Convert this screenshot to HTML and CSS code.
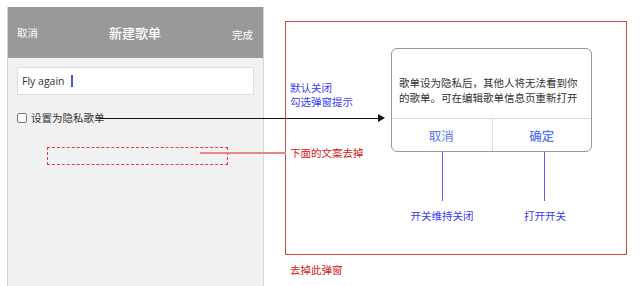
FILE: index.html
```html
<!DOCTYPE html>
<html lang="zh">
<head>
    <meta charset="UTF-8">
    <title>新建歌单</title>
    <link rel="stylesheet" href="styles.css">
</head>
<body>
    <div class="board">

        <div class="phone">
            <div class="phone-header">
                <span class="hd-side">取消</span>
                <span class="hd-title">新建歌单</span>
                <span class="hd-side hd-done">完成</span>
            </div>
            <div class="phone-body">
                <div class="name-input">Fly again<span class="caret"></span></div>
                <label class="private-row"><span class="checkbox"></span>设置为隐私歌单</label>
                <div class="removed-box"></div>
            </div>
        </div>

        <!-- 注释标注 -->
        <div class="frame"></div>
        <div class="note note-blue note-default">默认关闭<br>勾选弹窗提示</div>
        <div class="arrow"></div>
        <div class="red-line"></div>
        <div class="note note-red note-remove">下面的文案去掉</div>
        <div class="note note-red note-popup">去掉此弹窗</div>

        <div class="dialog">
            <div class="dialog-msg">歌单设为隐私后，其他人将无法看到你的歌单。可在编辑歌单信息页重新打开</div>
            <div class="dialog-btns">
                <span class="dialog-btn">取消</span>
                <span class="dialog-btn dialog-ok">确定</span>
            </div>
        </div>

        <div class="lead lead-cancel"></div>
        <div class="lead lead-ok"></div>
        <div class="note note-blue lead-label label-cancel">开关维持关闭</div>
        <div class="note note-blue lead-label label-ok">打开开关</div>
    </div>
</body>
</html>
```

FILE: styles.css
```css
body {
    margin: 0;
    background: #fff;
    font-family: "Noto Sans CJK SC", "Liberation Sans", sans-serif;
    overflow: hidden;
}
.board {
    position: relative;
    width: 640px;
    height: 286px;
}
.phone {
    position: absolute;
    left: 7px;
    top: 7px;
    width: 255px;
    height: 290px;
    background: #f1f1f1;
    border-left: 1px solid #d6d6d6;
    border-right: 1px solid #d6d6d6;
}
.phone-header {
    height: 51px;
    background: #999;
    color: #fff;
    display: flex;
    align-items: center;
    justify-content: space-between;
    padding: 0 10px 0 9px;
}
.hd-side {
    font-size: 10.5px;
    width: 30px;
}
.hd-done {
    text-align: right;
    margin-top: 3px;
}
.hd-title {
    font-size: 13px;
    font-weight: 500;
}
.phone-body {
    padding: 9px 9px 0 9px;
}
.name-input {
    height: 26px;
    background: #fff;
    border: 1px solid #ddd;
    font-family: "Open Sans", "Liberation Sans", sans-serif;
    font-size: 10.5px;
    color: #333;
    display: flex;
    align-items: center;
    padding-left: 4px;
}
.caret {
    display: inline-block;
    width: 2px;
    height: 12px;
    background: #3b5bdb;
    margin-left: 6px;
}
.private-row {
    display: flex;
    align-items: center;
    margin-top: 15px;
    font-size: 10.5px;
    color: #333;
}
.checkbox {
    width: 8px;
    height: 8px;
    border: 1px solid #777;
    border-radius: 2px;
    background: #fff;
    margin-right: 4px;
}
.removed-box {
    margin: 22px 0 0 30px;
    width: 179px;
    height: 16px;
    border: 1px dashed #e83a3a;
}
.frame {
    position: absolute;
    left: 285px;
    top: 21px;
    width: 340px;
    height: 232px;
    border: 1px solid #d64545;
}
.note {
    position: absolute;
    font-size: 10.5px;
    line-height: 14px;
    white-space: nowrap;
}
.note-blue {
    color: #3a3af5;
}
.note-red {
    color: #d42020;
}
.note-default {
    left: 290px;
    top: 81px;
}
.note-remove {
    left: 290px;
    top: 146px;
}
.note-popup {
    left: 290px;
    top: 263px;
}
.arrow {
    position: absolute;
    left: 100px;
    top: 118px;
    width: 279px;
    height: 1px;
    background: #111;
}
.arrow::after {
    content: "";
    position: absolute;
    right: -6px;
    top: -4px;
    border-left: 7px solid #111;
    border-top: 4.5px solid transparent;
    border-bottom: 4.5px solid transparent;
}
.red-line {
    position: absolute;
    left: 200px;
    top: 152px;
    width: 86px;
    height: 2px;
    background: #e48888;
}
.dialog {
    position: absolute;
    left: 391px;
    top: 48px;
    width: 199px;
    height: 102px;
    border: 1px solid #999;
    border-radius: 6px;
    background: #fff;
    display: flex;
    flex-direction: column;
}
.dialog-msg {
    height: 70px;
    box-sizing: border-box;
    padding: 26px 8px 0 7px;
    font-size: 10.5px;
    line-height: 15px;
    color: #333;
    border-bottom: 1px solid #ddd;
}
.dialog-btns {
    flex: 1;
    display: flex;
}
.dialog-btn {
    flex: 1;
    display: flex;
    align-items: center;
    justify-content: center;
    font-size: 12.5px;
    color: #5a78f0;
}
.dialog-ok {
    border-left: 1px solid #ddd;
    margin-left: 1px;
    font-weight: 500;
}
.lead {
    position: absolute;
    top: 152px;
    width: 1px;
    height: 49px;
    background: #5b5bf5;
}
.lead-cancel {
    left: 442px;
}
.lead-ok {
    left: 544px;
}
.lead-label {
    top: 209px;
    width: 80px;
    text-align: center;
}
.label-cancel {
    left: 402px;
}
.label-ok {
    left: 505px;
}
```
